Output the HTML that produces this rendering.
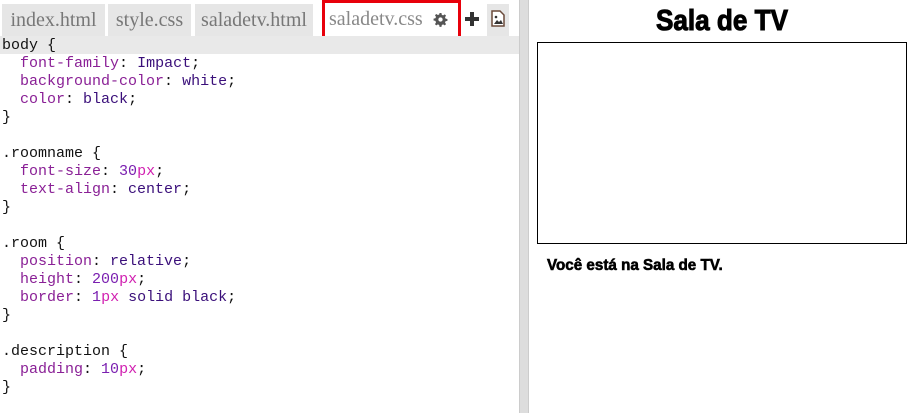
<!DOCTYPE html>
<html><head><style>
*{margin:0;padding:0;box-sizing:border-box}
body{width:915px;height:413px;overflow:hidden;background:#fff;position:relative;font-family:"Liberation Sans",sans-serif}
.tabbar{position:absolute;left:0;top:0;width:519px;height:36px;background:#fff}
.tab{position:absolute;top:4px;height:32px;background:#e6e6e6;color:#777;font-family:"Liberation Serif",serif;font-size:20px;line-height:32px;text-align:center}
.active{position:absolute;left:322px;top:0;width:139px;height:39px;border:3px solid #e8000b;background:#fff;color:#888;font-family:"Liberation Serif",serif;font-size:20px;line-height:33px;padding-left:4px}
.code{position:absolute;left:2px;top:37px;width:517px;height:376px;font-family:"Liberation Mono",monospace;font-size:15px;line-height:18px;color:#111}
.hl{position:absolute;left:0;top:36px;width:519px;height:18px;background:#e9e9e9}
.l{white-space:pre;height:18px}
.p{color:#8a2096}.v{color:#3a0f7a}.n{color:#7a1fb0}.u{color:#d11fb0}
.div{position:absolute;left:519px;top:0;width:10px;height:413px;background:#ddd;border-left:1px solid #ccc;border-right:1px solid #ccc}
.title{position:absolute;left:529px;width:386px;top:5px;text-align:center;font-weight:bold;font-size:29px;-webkit-text-stroke:1px #000;transform:scaleX(0.9);transform-origin:193px 0}
.room{position:absolute;left:537px;top:42px;width:370px;height:202px;border:1px solid #000}
.desc{position:absolute;left:547px;top:257px;font-weight:bold;font-size:16px;-webkit-text-stroke:0.6px #000;transform:scaleX(0.95);transform-origin:0 0;white-space:nowrap}
</style></head><body>
<div class="tabbar"></div>
<div class="tab" style="left:2px;width:103px">index.html</div>
<div class="tab" style="left:108px;width:83px">style.css</div>
<div class="tab" style="left:195px;width:118px">saladetv.html</div>
<div class="active">saladetv.css
<svg style="position:absolute;left:108px;top:9px" width="15" height="15" viewBox="0 0 16 16"><path fill="#555" d="M7 1h2l.4 2 1.4.6 1.7-1.1 1.4 1.4-1.1 1.7.6 1.4 2 .4v2l-2 .4-.6 1.4 1.1 1.7-1.4 1.4-1.7-1.1-1.4.6-.4 2H7l-.4-2-1.4-.6-1.7 1.1-1.4-1.4 1.1-1.7L2.6 9.4.6 9V7l2-.4.6-1.4-1.1-1.7 1.4-1.4 1.7 1.1 1.4-.6z"/><circle cx="8" cy="8" r="2.3" fill="#fff"/></svg>
</div>
<div style="position:absolute;left:463px;top:10px;width:18px;height:18px"><div style="position:absolute;left:7px;top:2px;width:4px;height:14px;background:#333"></div><div style="position:absolute;left:2px;top:7px;width:14px;height:4px;background:#333"></div></div>
<div style="position:absolute;left:487px;top:4px;width:22px;height:32px;background:#e6e6e6"></div>
<svg style="position:absolute;left:491px;top:10px" width="14" height="17" viewBox="0 0 14 17"><path d="M1 1h8l4 4v11H1z" fill="#fff" stroke="#6a4a3a" stroke-width="1.5"/><path d="M3 14l3-4 2 2 2-2 2 4z" fill="#333"/><circle cx="5" cy="7" r="1.3" fill="#333"/></svg>
<div class="hl"></div>
<div class="code">
<div class="l">body {</div>
<div class="l">  <span class="p">font-family</span>: <span class="v">Impact</span>;</div>
<div class="l">  <span class="p">background-color</span>: <span class="v">white</span>;</div>
<div class="l">  <span class="p">color</span>: <span class="v">black</span>;</div>
<div class="l">}</div>
<div class="l"> </div>
<div class="l">.roomname {</div>
<div class="l">  <span class="p">font-size</span>: <span class="n">30</span><span class="u">px</span>;</div>
<div class="l">  <span class="p">text-align</span>: <span class="v">center</span>;</div>
<div class="l">}</div>
<div class="l"> </div>
<div class="l">.room {</div>
<div class="l">  <span class="p">position</span>: <span class="v">relative</span>;</div>
<div class="l">  <span class="p">height</span>: <span class="n">200</span><span class="u">px</span>;</div>
<div class="l">  <span class="p">border</span>: <span class="n">1</span><span class="u">px</span> <span class="v">solid</span> <span class="v">black</span>;</div>
<div class="l">}</div>
<div class="l"> </div>
<div class="l">.description {</div>
<div class="l">  <span class="p">padding</span>: <span class="n">10</span><span class="u">px</span>;</div>
<div class="l">}</div>
</div>
<div class="div"></div>
<div class="title">Sala de TV</div>
<div class="room"></div>
<div class="desc">Você está na Sala de TV.</div>
</body></html>
